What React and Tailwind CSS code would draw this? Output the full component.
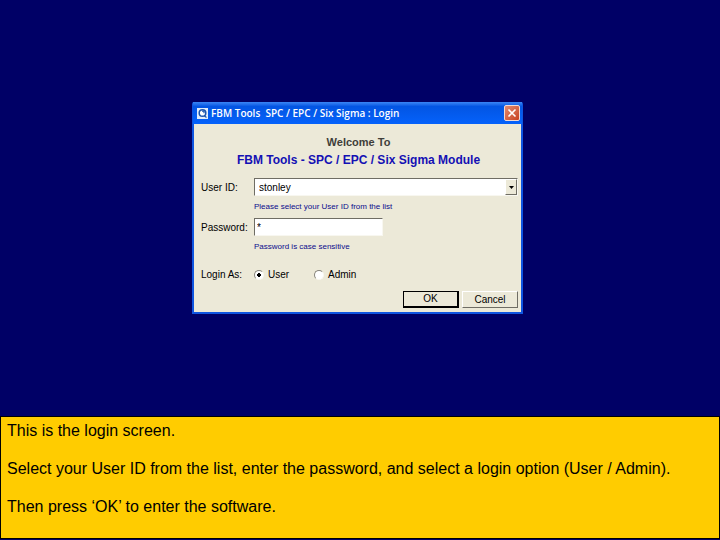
const Hint = ({ id, children }) => (
  <p id={id} className="col-start-2 text-[8px] leading-3 text-[#0b0b8c]">
    {children}
  </p>
);

const RoleOption = ({ label, ...props }) => (
  <label className="flex items-center gap-1 w-[60px]">
    <input
      type="radio"
      name="role"
      className="appearance-none size-[10px] shrink-0 rounded-full bg-white border border-t-[#85837a] border-l-[#85837a] border-r-[#f8f7f0] border-b-[#f8f7f0] checked:bg-[radial-gradient(circle,#000_2px,#fff_2px)]"
      {...props}
    />
    {label}
  </label>
);

const LoginWindow = () => {
  return (
    <div className="w-[331px] max-w-full border-2 border-t-0 border-[#0f55e0] rounded-t-xs bg-[#ece9d8] text-[10px] text-black">
      {/* TITLE BAR */}
      <div className="-mx-px h-[22px] flex items-center gap-[3px] pl-1 pr-[2px] bg-linear-to-b from-[#3a86f5] via-[#0355e3] via-20% to-[#0562fb]">
        <svg viewBox="0 0 11 11" className="size-[11px] shrink-0">
          <rect width="11" height="11" fill="#e4edfa" />
          <circle cx="5.5" cy="5" r="3.3" fill="#fff" stroke="#1c55ad" strokeWidth="1.5" />
          <path d="M5 3.2h2v2M7 7.5l2.5 2" fill="none" stroke="#1c55ad" strokeWidth="1.2" />
        </svg>
        <h1 className="flex-1 whitespace-pre font-['Open_Sans',sans-serif] text-[10px] font-semibold text-white">
          FBM Tools  SPC / EPC / Six Sigma : Login
        </h1>
        <button
          type="button"
          aria-label="Close"
          className="size-4 flex items-center justify-center rounded-xs border border-[#f3d9d2] bg-linear-to-br from-[#e08a70] to-[#c8401c]"
        >
          <svg viewBox="0 0 10 10" className="size-[10px]">
            <path d="M1.5 1.5l7 7M8.5 1.5l-7 7" stroke="#fff" strokeWidth="1.6" />
          </svg>
        </button>
      </div>

      <form className="pt-[10px] pb-1 pl-[5px] pr-[3px]">
        <div className="text-center leading-4 font-bold">
          <p className="text-[11px] text-[#3f3e3a]">Welcome To</p>
          <h2 className="mt-[2px] text-[12px] text-[#1410b4]">
            FBM Tools - SPC / EPC / Six Sigma Module
          </h2>
        </div>

        {/* FIELDS */}
        <div className="mt-[10px] pl-[2px] grid grid-cols-[53px_1fr] items-center gap-y-[5px]">
          <label htmlFor="user">User ID:</label>
          <div className="relative">
            <select
              id="user"
              aria-describedby="user-hint"
              className="block w-full h-[18px] appearance-none bg-white pl-1 pr-4 border border-t-[#6f6d64] border-l-[#6f6d64] border-r-[#f8f7f0] border-b-[#f8f7f0]"
            >
              <option>stonley</option>
            </select>
            <span className="pointer-events-none absolute right-px inset-y-px w-3 flex items-center justify-center bg-[#ece9d8] border border-t-white border-l-white border-r-[#6f6d64] border-b-[#6f6d64]">
              <svg viewBox="0 0 5 3" className="w-[5px] h-[3px]">
                <path d="M0 0h5L2.500 3z" />
              </svg>
            </span>
          </div>
          <Hint id="user-hint">Please select your User ID from the list</Hint>

          <label htmlFor="password">Password:</label>
          <input
            id="password"
            type="text"
            defaultValue="*"
            autoComplete="off"
            aria-describedby="password-hint"
            className="w-[129px] h-[18px] bg-white px-[2px] border border-t-[#6f6d64] border-l-[#6f6d64] border-r-[#f8f7f0] border-b-[#f8f7f0]"
          />
          <Hint id="password-hint">Password is case sensitive</Hint>
        </div>

        {/* ROLE */}
        <div
          role="radiogroup"
          aria-labelledby="role-label"
          className="mt-[14px] pl-[2px] grid grid-cols-[53px_1fr] items-center leading-4"
        >
          <span id="role-label">Login As:</span>
          <div className="flex">
            <RoleOption label="User" defaultChecked />
            <RoleOption label="Admin" />
          </div>
        </div>

        {/* ACTIONS */}
        <div className="mt-2 flex justify-end gap-[3px]">
          <button
            type="button"
            className="w-14 h-[17px] leading-none border border-black border-r-2 border-b-2"
          >
            OK
          </button>
          <button
            type="button"
            className="w-14 h-[17px] leading-none border border-t-white border-l-white border-r-[#6f6d64] border-b-[#6f6d64]"
          >
            Cancel
          </button>
        </div>
      </form>
    </div>
  );
};

const App = () => {
  return (
    <div className="min-h-screen flex flex-col bg-[#000066] font-['Liberation_Sans',Arial,sans-serif]">
      <main className="flex-1 flex items-center justify-center pr-[5px]">
        <LoginWindow />
      </main>

      {/* CAPTION */}
      <section className="mb-px space-y-[19px] border border-black bg-[#ffcc00] px-[6px] pt-1 pb-[22px] text-[16px] leading-[19px] text-black">
        <p>This is the login screen.</p>
        <p>
          Select your User ID from the list, enter the password, and select a
          login option (User / Admin).
        </p>
        <p>Then press ‘OK’ to enter the software.</p>
      </section>
    </div>
  );
};

export default App;
